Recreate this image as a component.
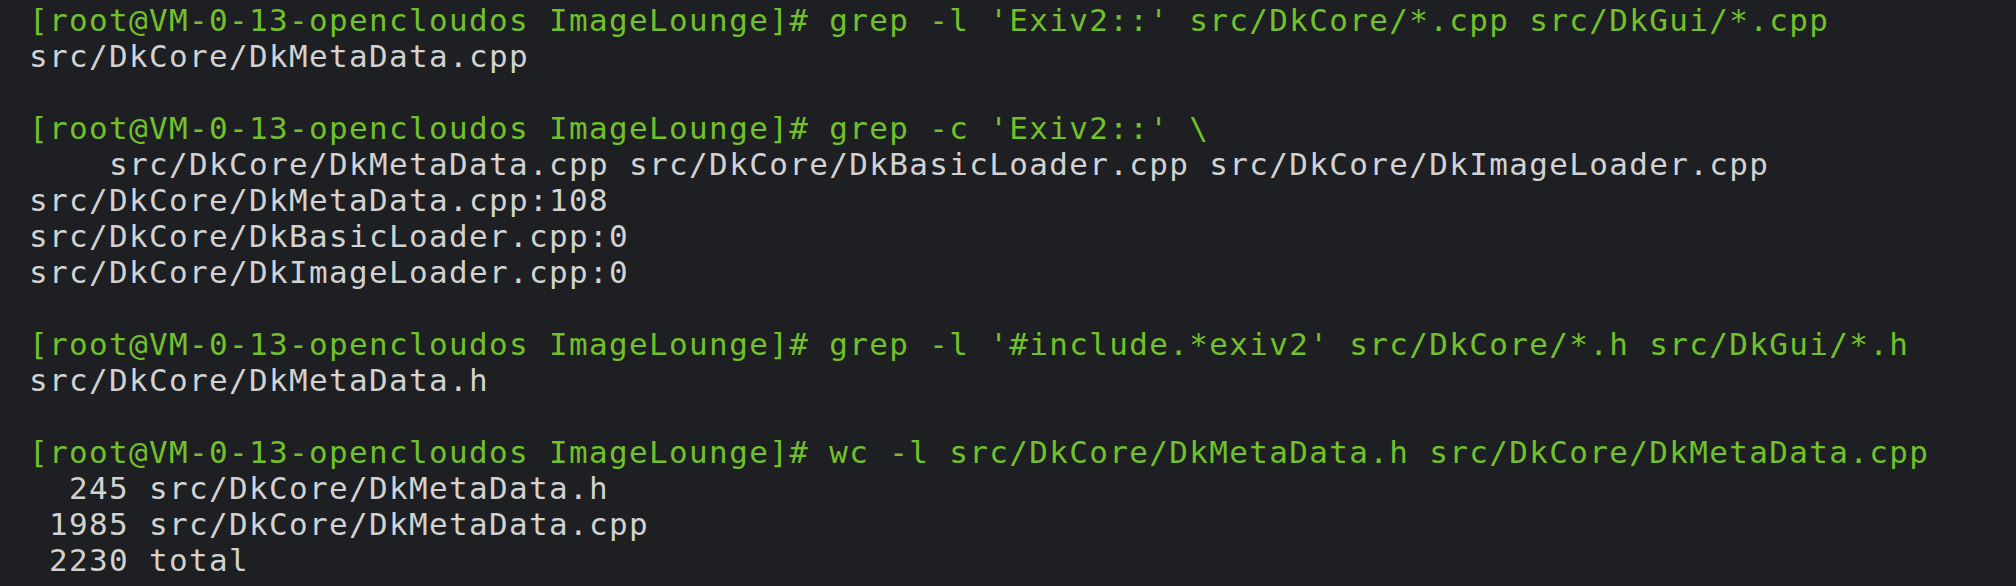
const lines: { text: string; prompt?: boolean }[] = [
  { text: "[root@VM-0-13-opencloudos ImageLounge]# grep -l 'Exiv2::' src/DkCore/*.cpp src/DkGui/*.cpp", prompt: true },
  { text: "src/DkCore/DkMetaData.cpp" },
  { text: "" },
  { text: "[root@VM-0-13-opencloudos ImageLounge]# grep -c 'Exiv2::' \\", prompt: true },
  { text: "    src/DkCore/DkMetaData.cpp src/DkCore/DkBasicLoader.cpp src/DkCore/DkImageLoader.cpp" },
  { text: "src/DkCore/DkMetaData.cpp:108" },
  { text: "src/DkCore/DkBasicLoader.cpp:0" },
  { text: "src/DkCore/DkImageLoader.cpp:0" },
  { text: "" },
  { text: "[root@VM-0-13-opencloudos ImageLounge]# grep -l '#include.*exiv2' src/DkCore/*.h src/DkGui/*.h", prompt: true },
  { text: "src/DkCore/DkMetaData.h" },
  { text: "" },
  { text: "[root@VM-0-13-opencloudos ImageLounge]# wc -l src/DkCore/DkMetaData.h src/DkCore/DkMetaData.cpp", prompt: true },
  { text: "  245 src/DkCore/DkMetaData.h" },
  { text: " 1985 src/DkCore/DkMetaData.cpp" },
  { text: " 2230 total" },
];

export default function App() {
  return (
    <div className="w-[2016px] h-[586px] overflow-hidden bg-[#1e1f22] pl-[29px] pt-[2px] font-['DejaVu_Sans_Mono',monospace] text-[31px] leading-[36px] tracking-[1.34px]">
      {lines.map((line, i) => (
        <div
          key={i}
          className={`h-[36px] whitespace-pre ${line.prompt ? 'text-[#72c12b]' : 'text-[#d2d2d2]'}`}
        >
          {line.text}
        </div>
      ))}
    </div>
  );
}
